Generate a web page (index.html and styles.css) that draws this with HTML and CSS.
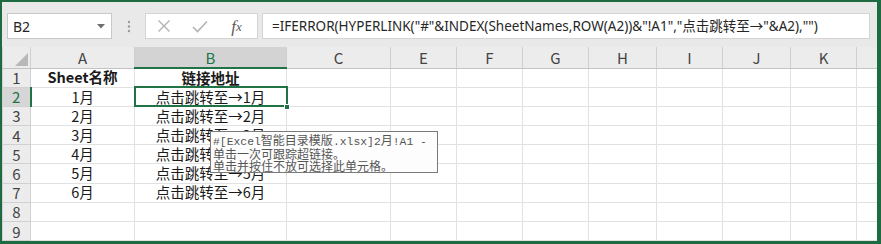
FILE: index.html
```html
<!DOCTYPE html>
<html lang="zh-CN">
<head>
<meta charset="utf-8">
<title>Excel 智能目录</title>
<link rel="stylesheet" href="styles.css">
</head>
<body>
<div class="frame">
  <div class="toolbar">
    <div class="namebox">
      <span class="ref">B2</span>
      <svg class="caret" width="8" height="5" viewBox="0 0 8 5"><path d="M0 0 H8 L4 4.5 Z" fill="#6e6e6e"/></svg>
    </div>
    <div class="grip">
      <svg width="4" height="13" viewBox="0 0 4 13"><circle cx="2" cy="2" r="1.2" fill="#9a9a9a"/><circle cx="2" cy="6.5" r="1.2" fill="#9a9a9a"/><circle cx="2" cy="11" r="1.2" fill="#9a9a9a"/></svg>
    </div>
    <div class="fxbox">
      <span class="fxbtn"><svg width="14" height="14" viewBox="0 0 14 14"><path d="M1.5 1.5 L12.5 12.5 M12.5 1.5 L1.5 12.5" stroke="#b3b3b3" stroke-width="1.4" fill="none"/></svg></span>
      <span class="fxbtn"><svg width="16" height="13" viewBox="0 0 16 13"><path d="M1 7 L5.5 11.5 L15 1.5" stroke="#b3b3b3" stroke-width="1.6" fill="none"/></svg></span>
      <span class="fxbtn fx">f<span class="x">x</span></span>
    </div>
    <div class="formula">=IFERROR(HYPERLINK("#"&amp;INDEX(SheetNames,ROW(A2))&amp;"!A1","点击跳转至→"&amp;A2),"")</div>
  </div>

  <table class="sheet">
    <colgroup>
      <col class="c-rh"><col class="c-a"><col class="c-b"><col class="c-c"><col class="c-n"><col class="c-n"><col class="c-n"><col class="c-w"><col class="c-n"><col class="c-w"><col class="c-n"><col class="c-l">
    </colgroup>
    <tr class="hdr">
      <th class="corner"><span class="tri"></span></th>
      <th>A</th><th class="on">B</th><th>C</th><th>E</th><th>F</th><th>G</th><th>H</th><th>I</th><th>J</th><th>K</th><th></th>
    </tr>
    <tr><th class="rh">1</th><td class="b">Sheet名称</td><td class="b">链接地址</td><td></td><td></td><td></td><td></td><td></td><td></td><td></td><td></td><td></td></tr>
    <tr><th class="rh on">2</th><td>1月</td><td class="sel">点击跳转至→1月<span class="handle"></span></td><td></td><td></td><td></td><td></td><td></td><td></td><td></td><td></td><td></td></tr>
    <tr><th class="rh">3</th><td>2月</td><td>点击跳转至→2月</td><td></td><td></td><td></td><td></td><td></td><td></td><td></td><td></td><td></td></tr>
    <tr><th class="rh">4</th><td>3月</td><td>点击跳转至→3月</td><td></td><td></td><td></td><td></td><td></td><td></td><td></td><td></td><td></td></tr>
    <tr><th class="rh">5</th><td>4月</td><td>点击跳转至→4月</td><td></td><td></td><td></td><td></td><td></td><td></td><td></td><td></td><td></td></tr>
    <tr><th class="rh">6</th><td>5月</td><td>点击跳转至→5月</td><td></td><td></td><td></td><td></td><td></td><td></td><td></td><td></td><td></td></tr>
    <tr><th class="rh">7</th><td>6月</td><td>点击跳转至→6月</td><td></td><td></td><td></td><td></td><td></td><td></td><td></td><td></td><td></td></tr>
    <tr><th class="rh">8</th><td></td><td></td><td></td><td></td><td></td><td></td><td></td><td></td><td></td><td></td><td></td></tr>
    <tr><th class="rh">9</th><td></td><td></td><td></td><td></td><td></td><td></td><td></td><td></td><td></td><td></td><td></td></tr>
  </table>

  <div class="tip">
    <div class="tl"><span class="m">#[Excel</span>智能目录模版<span class="m">.xlsx]2</span>月<span class="m">!A1 -</span></div>
    <div class="tl">单击一次可跟踪超链接。</div>
    <div class="tl">单击并按住不放可选择此单元格。</div>
  </div>
</div>
</body>
</html>
```

FILE: styles.css
```css
* { box-sizing: border-box; }
html, body { margin: 0; padding: 0; background: #ffffff; }

.frame {
  position: relative;
  width: 881px;
  height: 244px;
  border-style: solid;
  border-color: #1f6b41;
  border-width: 2px 4px 3px 2px;
  background: #e9e9e9;
  overflow: hidden;
  font-family: "Noto Sans CJK SC", sans-serif;
}

/* ---------- toolbar ---------- */
.toolbar {
  height: 45px;
  display: flex;
  align-items: flex-start;
  padding: 11px 7px 0 5px;
}
.namebox {
  width: 105px;
  height: 26px;
  background: #ffffff;
  border: 1px solid #c9c9c9;
  display: flex;
  align-items: center;
  justify-content: space-between;
  padding: 0 6px 0 5px;
}
.ref {
  font-family: "Noto Sans", sans-serif;
  font-size: 14px;
  color: #262626;
}
.caret { margin-top: 1px; }
.grip {
  width: 33px;
  height: 26px;
  display: flex;
  align-items: center;
  justify-content: center;
}
.fxbox {
  width: 113px;
  height: 26px;
  background: #ffffff;
  border: 1px solid #d4d4d4;
  display: flex;
  align-items: center;
}
.fxbtn {
  width: 37px;
  display: flex;
  justify-content: center;
  align-items: center;
}
.fxbtn:first-child { width: 35px; }
.fx {
  font-family: "Liberation Serif", serif;
  font-style: italic;
  font-size: 17px;
  color: #595959;
  line-height: 1;
}
.fx .x { font-size: 13px; vertical-align: -2px; }
.formula {
  flex: 1;
  margin-left: 4px;
  height: 26px;
  background: #ffffff;
  border: 1px solid #d4d4d4;
  padding: 0 0 0 9px;
  font-family: "Noto Sans", "Noto Sans CJK SC", sans-serif;
  font-size: 13.5px;
  line-height: 24px;
  color: #262626;
  white-space: nowrap;
  overflow: hidden;
}

/* ---------- sheet ---------- */
.sheet {
  width: 875px;
  table-layout: fixed;
  border-collapse: collapse;
  background: #ffffff;
}
.c-rh { width: 28px; }
.c-a { width: 104px; }
.c-b { width: 152px; }
.c-c { width: 104px; }
.c-n { width: 66px; }
.c-w { width: 68px; }
.c-l { width: 21px; }

.sheet tr { height: 19.2px; }
.sheet tr.hdr { height: 21px; }

.sheet td {
  border: 1px solid #e1e1e1;
  padding: 0;
  text-align: center;
  font-size: 14.5px;
  line-height: 1;
  color: #1a1a1a;
  white-space: nowrap;
  overflow: visible;
}
.sheet td.b { font-weight: bold; }

.sheet th {
  background: #ececec;
  border: 1px solid #d0d0d0;
  font-weight: normal;
  font-family: "Noto Sans CJK SC", sans-serif;
  color: #444444;
  padding: 0;
  line-height: 1;
}
.hdr th {
  font-size: 15px;
  border-bottom: 1px solid #c3c3c3;
  border-top: none;
}
.hdr th.on {
  background: #d3d3d3;
  color: #217346;
  border-bottom: 2px solid #217346;
}
.rh {
  font-size: 15px;
  border-right: 1px solid #c3c3c3;
  border-left: none;
}
.rh.on {
  background: #d6d6d6;
  color: #217346;
  border-right: 2px solid #217346;
}
.corner { position: relative; }
.tri {
  position: absolute;
  right: 2px;
  bottom: 2px;
  width: 0;
  height: 0;
  border-left: 13px solid transparent;
  border-bottom: 13px solid #b8b8b8;
}

.sel {
  position: relative;
  outline: 2px solid #217346;
  outline-offset: -1px;
}
.handle {
  position: absolute;
  right: -4px;
  bottom: -4px;
  width: 6px;
  height: 6px;
  background: #217346;
  border: 1px solid #ffffff;
}

/* ---------- tooltip ---------- */
.tip {
  position: absolute;
  left: 208px;
  top: 129px;
  width: 228px;
  height: 42px;
  background: #fdfdfd;
  border: 1px solid #7a7a7a;
  padding: 2px 0 0 2px;
  font-family: "Noto Sans CJK SC", sans-serif;
  font-size: 12px;
  line-height: 12px;
  color: #555555;
  white-space: nowrap;
}
.tip .m {
  font-family: "Liberation Mono", monospace;
  font-size: 11.4px;
}
```
